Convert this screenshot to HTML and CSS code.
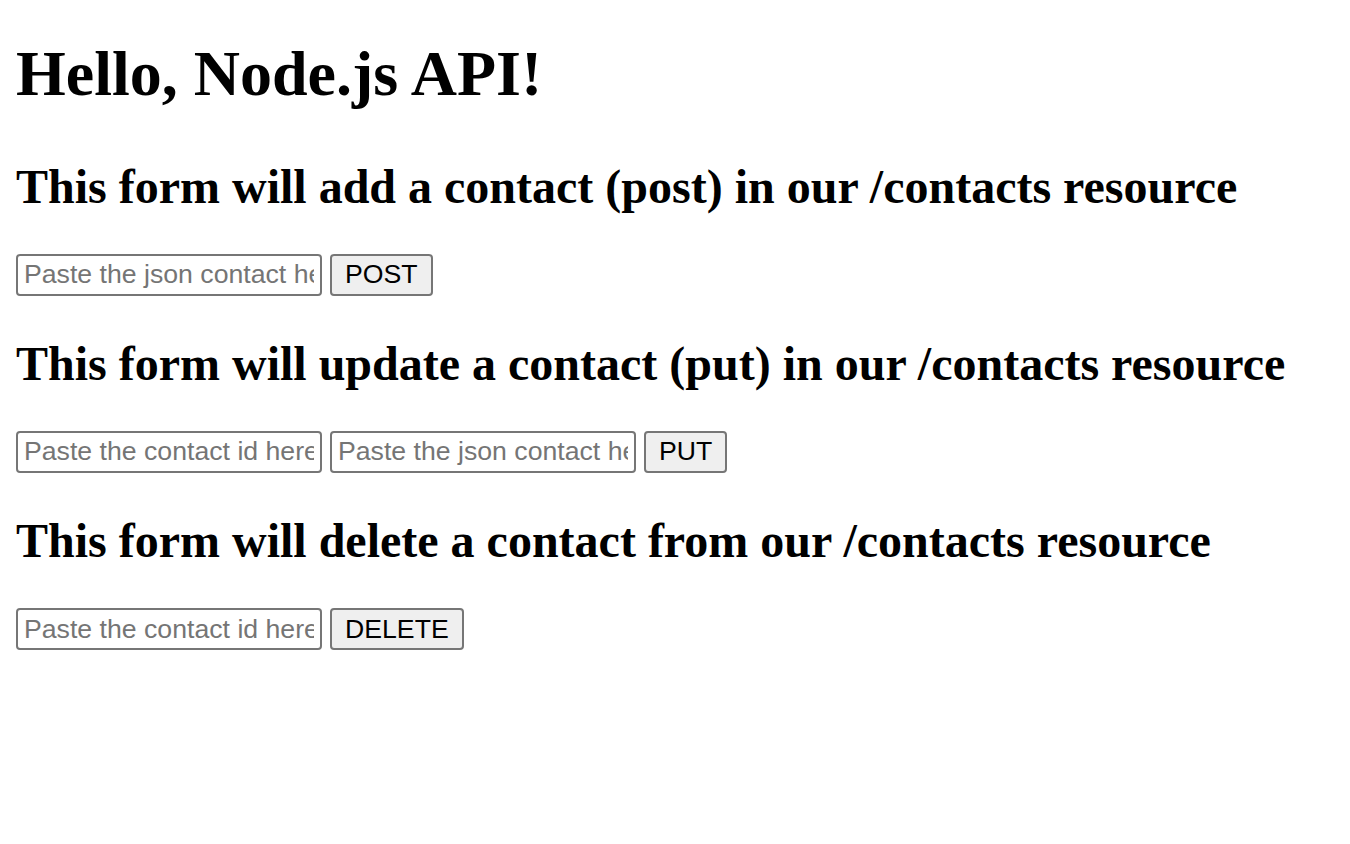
FILE: index.html
```html
<!DOCTYPE html>
<html>
<head>
<meta charset="utf-8">
<title>Hello, Node.js API!</title>
<link rel="stylesheet" href="styles.css">
</head>
<body class="page">
<h1 class="title">Hello, Node.js API!</h1>
<h2 class="subtitle">This form will add a contact (post) in our /contacts resource</h2>
<form class="form">
<input class="field" type="text" placeholder="Paste the json contact here">
<button class="btn" type="button">POST</button>
</form>
<h2 class="subtitle">This form will update a contact (put) in our /contacts resource</h2>
<form class="form">
<input class="field" type="text" placeholder="Paste the contact id here">
<input class="field" type="text" placeholder="Paste the json contact here">
<button class="btn" type="button">PUT</button>
</form>
<h2 class="subtitle">This form will delete a contact from our /contacts resource</h2>
<form class="form">
<input class="field" type="text" placeholder="Paste the contact id here">
<button class="btn" type="button">DELETE</button>
</form>
</body>
</html>
```
FILE: styles.css
```css
html { background: #fff; }
.page {
  margin: 0;
  padding: 37px 16px 0;
  font-family: "Liberation Serif", "Times New Roman", serif;
  font-size: 32px;
  color: #000;
}
.title {
  font-size: 64px;
  font-weight: bold;
  margin: 0 0 48px;
  line-height: 1.15;
}
.subtitle {
  font-size: 48px;
  font-weight: bold;
  margin: 40px 0;
  line-height: 1.15;
}
.form {
  margin: 0;
  display: flex;
  align-items: center;
  gap: 8px;
  height: 42px;
}
.field {
  box-sizing: border-box;
  width: 306px;
  height: 42px;
  padding: 0 6px;
  border: 2px solid #767676;
  border-radius: 4px;
  font-family: "Liberation Sans", Arial, sans-serif;
  font-size: 26.67px;
  color: #000;
  background: #fff;
  margin: 0;
}
.field::placeholder { color: #757575; opacity: 1; }
.btn {
  box-sizing: border-box;
  height: 42px;
  padding: 0 13px;
  border: 2px solid #767676;
  border-radius: 4px;
  background: #efefef;
  font-family: "Liberation Sans", Arial, sans-serif;
  font-size: 26.67px;
  color: #000;
  margin: 0;
}
```
